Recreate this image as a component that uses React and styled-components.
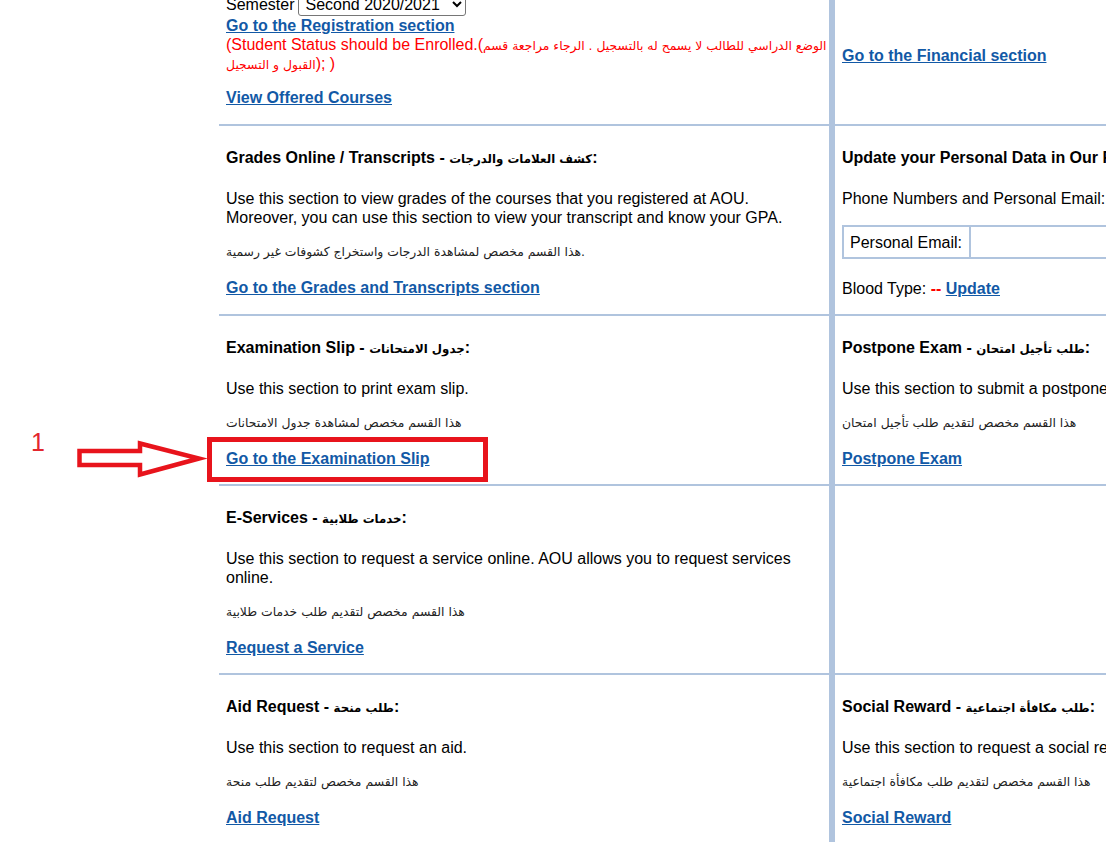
import React from 'react';
import styled, { createGlobalStyle } from 'styled-components';

const GlobalStyle = createGlobalStyle`
  html, body { margin: 0; padding: 0; overflow: hidden; background: #ffffff; }
  body {
    font-family: "Liberation Sans", Arial, "DejaVu Sans", sans-serif;
    font-size: 16px;
    color: #000000;
  }
`;

const LINE = '#b0c4de';
const RED = '#e8141c';

const Page = styled.div`
  position: relative;
  width: 1106px;
  height: 842px;
  overflow: hidden;
`;

const Board = styled.div`
  display: grid;
  grid-template-columns: 610px 646px;
  margin: -14px 0 0 219px;
`;

const Cell = styled.div`
  display: flex;
  flex-direction: column;
  align-items: flex-start;
  justify-content: ${p => (p.$center ? 'center' : 'flex-start')};
  padding: ${p => p.$top ?? 22}px 7px ${p => p.$bottom ?? 16}px 7px;
  border-bottom: 2px solid ${LINE};
  border-left: ${p => (p.$right ? `6px solid ${LINE}` : 'none')};
  line-height: 19px;
  min-width: 0;
`;

const Heading = styled.div`
  height: 19px;
  font-weight: bold;
  white-space: nowrap;
  margin-bottom: 22px;
`;

const ArabicTitle = styled.span`
  font-family: "DejaVu Sans", sans-serif;
  font-size: 11.8px;
  font-weight: bold;
  line-height: 1;
`;

const Desc = styled.div`
  white-space: ${p => (p.$nowrap ? 'nowrap' : 'normal')};
`;

const ArabicNote = styled.div`
  height: 19px;
  font-family: "DejaVu Sans", sans-serif;
  font-size: 12.4px;
  color: #222222;
  margin-top: 15px;
  white-space: nowrap;
`;

const LinkText = styled.a`
  display: block;
  margin-top: ${p => p.$gap ?? 17}px;
  color: #1259a6;
  font-weight: bold;
  text-decoration: underline;
  white-space: nowrap;
`;

const SemesterLine = styled.div`
  display: flex;
  align-items: center;
  gap: 4px;
  height: 24px;
`;

const SemesterSelect = styled.select`
  font-family: "Liberation Sans", Arial, sans-serif;
  font-size: 16px;
  width: 168px;
  height: 24px;
  border: 1px solid #767676;
  border-radius: 3px;
  background: #ffffff;
  color: #000000;
  padding: 0 2px;
`;

const RedNote = styled.div`
  align-self: stretch;
  margin-right: -7px;
  color: #ff0000;
  margin-bottom: 15px;
`;

const RedArabic = styled.span`
  font-family: "DejaVu Sans", sans-serif;
  font-size: 12.4px;
  line-height: 1;
`;

const InfoTable = styled.div`
  display: flex;
  height: 34px;
  box-sizing: border-box;
  border: 2px solid ${LINE};
  margin-top: 17px;
`;

const InfoLabel = styled.div`
  display: flex;
  align-items: center;
  padding: 0 7px 0 6px;
  border-right: 2px solid ${LINE};
  white-space: nowrap;
`;

const InfoValue = styled.div`
  width: 320px;
`;

const BloodLine = styled.div`
  margin-top: 20px;
  white-space: nowrap;
`;

const RedDash = styled.span`
  color: #ff0000;
  font-weight: bold;
`;

const InlineLink = styled.a`
  color: #1259a6;
  font-weight: bold;
  text-decoration: underline;
`;

const StepNumber = styled.div`
  position: absolute;
  left: 31px;
  top: 430px;
  font-family: "Liberation Sans", Arial, sans-serif;
  font-size: 25px;
  line-height: 25px;
  color: #e3262d;
`;

const ArrowMark = styled.svg`
  position: absolute;
  left: 70px;
  top: 436px;
`;

const HighlightBox = styled.div`
  position: absolute;
  left: 207px;
  top: 437px;
  width: 281px;
  height: 45px;
  box-sizing: border-box;
  border: 5px solid ${RED};
`;

const Section = ({ title, arabic, text, note, link, nowrap }) => (
  <>
    <Heading>
      {title} - <ArabicTitle>{arabic}</ArabicTitle>:
    </Heading>
    <Desc $nowrap={nowrap}>{text}</Desc>
    <ArabicNote>{note}</ArabicNote>
    <LinkText href="#">{link}</LinkText>
  </>
);

const rows = [
  [
    {
      title: 'Examination Slip',
      arabic: 'جدول الامتحانات',
      text: 'Use this section to print exam slip.',
      note: 'هذا القسم مخصص لمشاهدة جدول الامتحانات',
      link: 'Go to the Examination Slip',
    },
    {
      title: 'Postpone Exam',
      arabic: 'طلب تأجيل امتحان',
      text: 'Use this section to submit a postpone exam request.',
      note: 'هذا القسم مخصص لتقديم طلب تأجيل امتحان',
      link: 'Postpone Exam',
      nowrap: true,
    },
  ],
  [
    {
      title: 'E-Services',
      arabic: 'خدمات طلابية',
      text: 'Use this section to request a service online. AOU allows you to request services online.',
      note: 'هذا القسم مخصص لتقديم طلب خدمات طلابية',
      link: 'Request a Service',
    },
    null,
  ],
  [
    {
      title: 'Aid Request',
      arabic: 'طلب منحة',
      text: 'Use this section to request an aid.',
      note: 'هذا القسم مخصص لتقديم طلب منحة',
      link: 'Aid Request',
    },
    {
      title: 'Social Reward',
      arabic: 'طلب مكافأة اجتماعية',
      text: 'Use this section to request a social reward.',
      note: 'هذا القسم مخصص لتقديم طلب مكافأة اجتماعية',
      link: 'Social Reward',
      nowrap: true,
    },
  ],
];

export default function App() {
  return (
    <Page>
      <GlobalStyle />
      <Board>
        <Cell $top={6} $bottom={17}>
          <SemesterLine>
            <span>Semester</span>
            <SemesterSelect defaultValue="s2">
              <option value="s2">Second 2020/2021</option>
            </SemesterSelect>
          </SemesterLine>
          <LinkText href="#" $gap={0}>Go to the Registration section</LinkText>
          <RedNote>
            (Student Status should be Enrolled.(
            <RedArabic>الوضع الدراسي للطالب لا يسمح له بالتسجيل . الرجاء مراجعة قسم القبول و التسجيل</RedArabic>); )
          </RedNote>
          <LinkText href="#" $gap={0}>View Offered Courses</LinkText>
        </Cell>
        <Cell $right $center $top={17} $bottom={17}>
          <LinkText href="#" $gap={0}>Go to the Financial section</LinkText>
        </Cell>

        <Cell>
          <Section
            title="Grades Online / Transcripts"
            arabic="كشف العلامات والدرجات"
            text="Use this section to view grades of the courses that you registered at AOU. Moreover, you can use this section to view your transcript and know your GPA."
            note="هذا القسم مخصص لمشاهدة الدرجات واستخراج كشوفات غير رسمية."
            link="Go to the Grades and Transcripts section"
          />
        </Cell>
        <Cell $right>
          <Heading>Update your Personal Data in Our Records</Heading>
          <Desc $nowrap>Phone Numbers and Personal Email:</Desc>
          <InfoTable>
            <InfoLabel>Personal Email:</InfoLabel>
            <InfoValue />
          </InfoTable>
          <BloodLine>
            Blood Type: <RedDash>--</RedDash> <InlineLink href="#">Update</InlineLink>
          </BloodLine>
        </Cell>

        {rows.map((row, i) => (
          <React.Fragment key={i}>
            <Cell>{row[0] && <Section {...row[0]} />}</Cell>
            <Cell $right>{row[1] && <Section {...row[1]} />}</Cell>
          </React.Fragment>
        ))}
      </Board>

      <StepNumber>1</StepNumber>
      <ArrowMark width="140" height="46" viewBox="0 0 140 46">
        <polygon
          points="9.5,15 70,15 70,7.5 129,22.5 70,38.5 70,29 9.5,29"
          fill="#ffffff"
          stroke={RED}
          strokeWidth="4.5"
          strokeLinejoin="miter"
        />
      </ArrowMark>
      <HighlightBox />
    </Page>
  );
}
